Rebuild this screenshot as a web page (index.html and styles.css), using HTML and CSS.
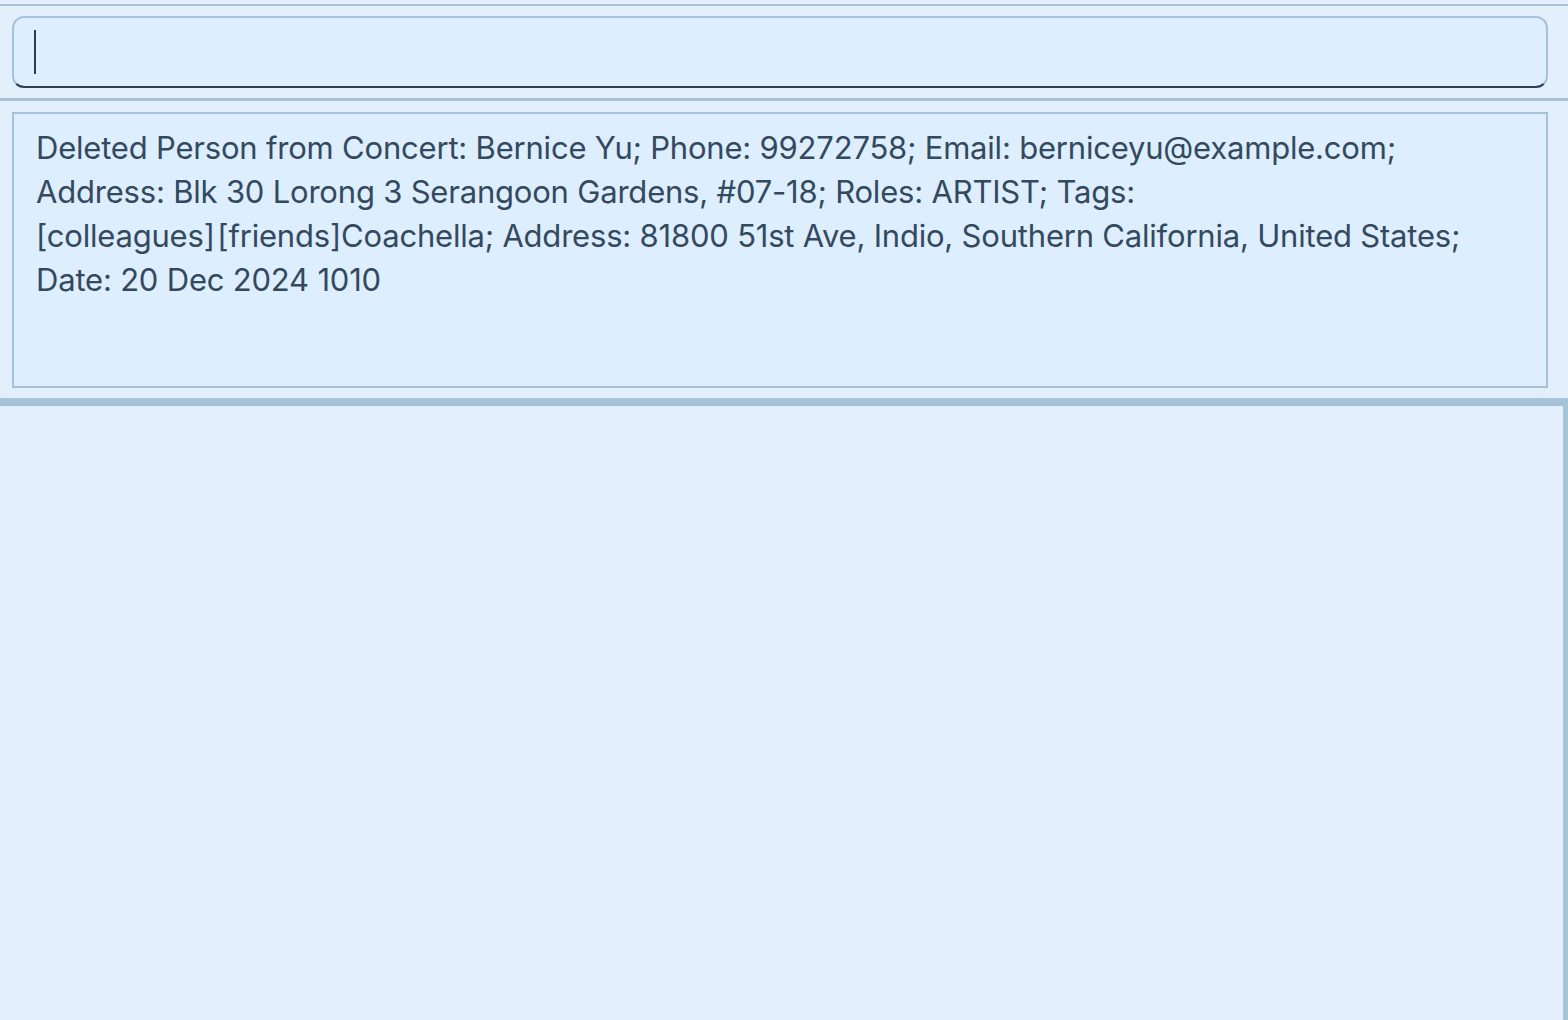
FILE: index.html
```html
<!DOCTYPE html>
<html>
<head>
<meta charset="utf-8">
<link rel="stylesheet" href="styles.css">
</head>
<body>
<div class="app">
  <div class="top-line"></div>
  <div class="command-area">
    <div class="command-box"><span class="caret"></span></div>
  </div>
  <div class="sep"></div>
  <div class="result-area">
    <div class="result-box">Deleted Person from Concert: Bernice Yu; Phone: 99272758; Email: berniceyu@example.com; Address: Blk 30 Lorong 3 Serangoon Gardens, #07-18; Roles: ARTIST; Tags: [colleagues]&#x2060;&#x200A;&#x2060;[friends]&#x2060;Coachella; Address: 81800 51st Ave, Indio, Southern California, United States; Date: 20 Dec 2024 1010</div>
  </div>
  <div class="sep-thick"></div>
  <div class="list-area"></div>
</div>
</body>
</html>
```
FILE: styles.css
```css
html, body {
  margin: 0;
  padding: 0;
  background: #e3f0fc;
  font-family: Inter, "Noto Sans", sans-serif;
}
.app {
  width: 1568px;
  height: 1020px;
  display: flex;
  flex-direction: column;
  overflow: hidden;
}
.top-line {
  margin-top: 4px;
  height: 2px;
  background: #a6c2d9;
}
.command-area {
  padding: 10px 20px 10px 12px;
}
.command-box {
  box-sizing: border-box;
  height: 72px;
  border: 2px solid #a6c2d9;
  border-bottom-color: #2c3e50;
  border-radius: 12px;
  background: #ddeefe;
  padding: 12px 0 0 20px;
}
.caret {
  display: block;
  width: 1.5px;
  height: 44px;
  background: #2c3e50;
}
.sep {
  height: 3px;
  background: #a6c2d9;
}
.result-area {
  padding: 11px 20px 10px 12px;
}
.result-box {
  box-sizing: border-box;
  height: 276px;
  border: 2px solid #a6c2d9;
  background: #ddeefe;
  padding: 12px 60px 0 22px;
  color: #34495e;
  font-size: 31px;
  line-height: 44px;
  letter-spacing: -0.2px;
}
.sep-thick {
  height: 8px;
  background: #a6c2d9;
}
.list-area {
  flex: 1;
  background: #e3f0fc;
  border-right: 5px solid #a6c2d9;
}
```
